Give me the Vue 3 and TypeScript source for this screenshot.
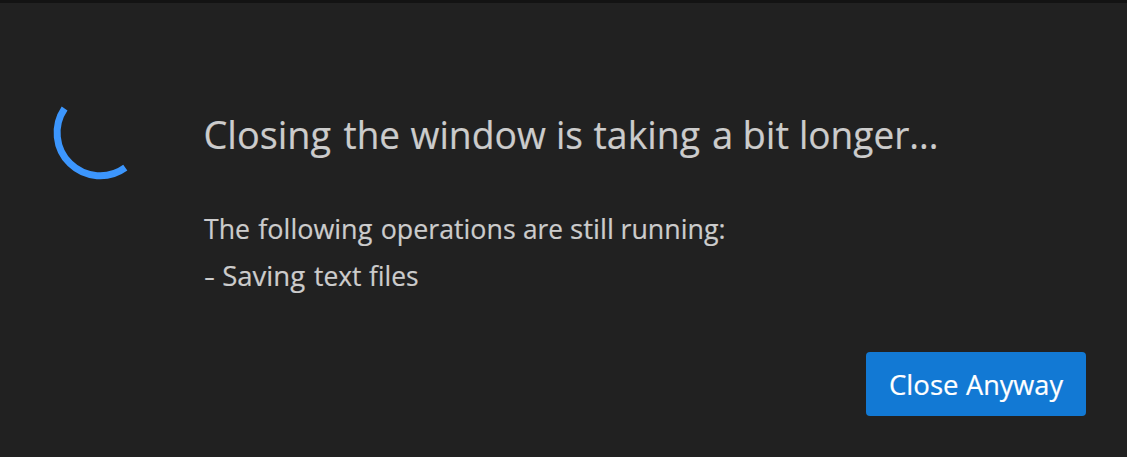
<script setup lang="ts">
interface Word { text: string; x: number; width: number }

const word = (text: string, x: number, width: number): Word => ({ text, x, width })

const title: Word[] = [
  word('Closing', -0.5, 127.5), word('the', 139.5, 56.5), word('window', 206.5, 135.5),
  word('is', 352, 27), word('taking', 389.5, 106.5), word('a', 508, 21.3),
  word('bit', 538.5, 46.5), word('longer...', 595, 139.5),
]
const details: Word[][] = [
  [
    word('The', 0, 46), word('following', 54.3, 114), word('operations', 176.7, 135),
    word('are', 319, 40), word('still', 366, 44), word('running:', 416.5, 105),
  ],
  [word('-', 0, 11), word('Saving', 18.2, 83), word('text', 110, 47.5), word('files', 165, 49.5)],
]
const action: Word[] = [word('Close', 0, 69.5), word('Anyway', 77, 97)]
</script>

<template>
  <main class="dialog">
    <svg class="spinner" viewBox="0 0 100 100" aria-hidden="true">
      <path d="M14.6 18.5 A43 43 0 0 0 75.3 77.6" fill="none" stroke="#3c96fd" stroke-width="7" />
    </svg>
    <section class="message">
      <h1>
        <svg class="line title" width="740" height="60">
          <text v-for="w in title" :key="w.x" :x="w.x" y="40" :textLength="w.width" lengthAdjust="spacingAndGlyphs">{{ w.text }}</text>
        </svg>
      </h1>
      <div class="detail">
        <svg v-for="(line, i) in details" :key="i" class="line" width="540" height="47">
          <text v-for="w in line" :key="w.x" :x="w.x" y="33" :textLength="w.width" lengthAdjust="spacingAndGlyphs">{{ w.text }}</text>
        </svg>
      </div>
    </section>
    <button class="close">
      <svg class="line" width="174" height="47">
        <text v-for="w in action" :key="w.x" :x="w.x" y="34" :textLength="w.width" lengthAdjust="spacingAndGlyphs">{{ w.text }}</text>
      </svg>
    </button>
  </main>
</template>

<style scoped>
.dialog { position: relative; box-sizing: border-box; width: 1127px; height: 457px; padding: 106px 0 0 204px; background: #212121; border-top: 3px solid #131313; color: #ccc; font-family: "Open Sans", "Noto Sans", sans-serif; }
.spinner { position: absolute; left: 50px; top: 87px; width: 100px; height: 100px; }
h1 { margin: 0; height: 60px; font-weight: 400; }
.line { display: block; overflow: visible; fill: currentColor; stroke: currentColor; stroke-width: 0.2px; font-size: 27.5px; }
.title { font-size: 39px; }
.detail { margin-top: 37px; }
.close { position: absolute; right: 41px; bottom: 41px; width: 220px; height: 64px; padding: 0 23px; border: 0; border-radius: 4px; background: #1279d4; color: #fff; font-family: inherit; }
</style>
